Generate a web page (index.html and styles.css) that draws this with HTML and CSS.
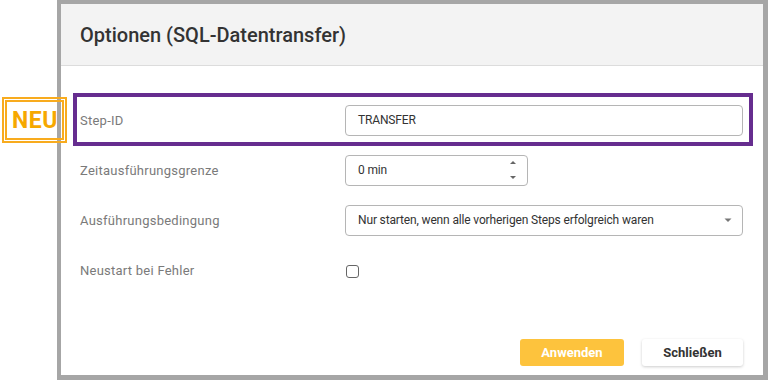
FILE: index.html
```html
<!DOCTYPE html>
<html lang="de">
<head>
    <meta charset="UTF-8">
    <meta name="viewport" content="width=device-width, initial-scale=1.0">
    <title>Optionen (SQL-Datentransfer)</title>
    <link rel="stylesheet" href="styles.css">
</head>
<body>
    <div class="stage">
        <div class="new-badge"><span>NEU</span></div>

        <div class="frame">
            <div class="dialog">
                <div class="dialog-header">
                    <h2>Optionen (SQL-Datentransfer)</h2>
                </div>

                <div class="dialog-body">
                    <div class="form-row highlight">
                        <label class="form-label">Step-ID</label>
                        <div class="field text-field">TRANSFER</div>
                    </div>

                    <div class="form-row">
                        <label class="form-label">Zeitausführungsgrenze</label>
                        <div class="field number-field">
                            <span>0 min</span>
                            <svg class="spinner" width="8" height="22" viewBox="0 0 8 22">
                                <path d="M1 5 L4 2 L7 5 Z" fill="#666"/>
                                <path d="M1 17 L4 20 L7 17 Z" fill="#666"/>
                            </svg>
                        </div>
                    </div>

                    <div class="form-row">
                        <label class="form-label">Ausführungsbedingung</label>
                        <div class="field select-field">
                            <span>Nur starten, wenn alle vorherigen Steps erfolgreich waren</span>
                            <svg class="caret" width="8" height="5" viewBox="0 0 8 5">
                                <path d="M0.5 0.5 L4 4 L7.5 0.5 Z" fill="#777"/>
                            </svg>
                        </div>
                    </div>

                    <div class="form-row">
                        <label class="form-label">Neustart bei Fehler</label>
                        <span class="checkbox"></span>
                    </div>
                </div>

                <div class="dialog-footer">
                    <button class="btn btn-primary">Anwenden</button>
                    <button class="btn btn-default">Schließen</button>
                </div>
            </div>
        </div>
    </div>
</body>
</html>
```

FILE: styles.css
```css
body {
    margin: 0;
    background: #fff;
    font-family: Roboto, "Liberation Sans", Arial, sans-serif;
}

.stage {
    position: relative;
    width: 768px;
    height: 380px;
    padding-left: 57px;
    box-sizing: border-box;
}

.frame {
    height: 100%;
    background: #a6a6a6;
    padding: 4px 5px 5px 4px;
    box-sizing: border-box;
}

.dialog {
    height: 100%;
    background: #fff;
    display: flex;
    flex-direction: column;
}

.dialog-header {
    height: 61px;
    background: #f3f3f3;
    border-bottom: 1px solid #dcdcdc;
    display: flex;
    align-items: center;
    padding-left: 19px;
}

.dialog-header h2 {
    margin: 0;
    font-size: 20px;
    font-weight: 500;
    color: #333;
}

.dialog-body {
    padding: 29px 20px 0 19px;
}

.form-row {
    height: 50px;
    display: flex;
    align-items: center;
    position: relative;
}

.form-row.highlight::after {
    content: "";
    position: absolute;
    top: -2px;
    right: -10px;
    bottom: -1px;
    left: -7px;
    border: 4px solid #662d8f;
    pointer-events: none;
}

.form-label {
    width: 265px;
    flex-shrink: 0;
    font-size: 13px;
    letter-spacing: 0.25px;
    color: #7a7a7a;
}

.field {
    height: 31px;
    box-sizing: border-box;
    border: 1px solid #b5b5b5;
    border-radius: 4px;
    padding: 0 12px;
    display: flex;
    align-items: center;
    font-size: 12px;
    letter-spacing: -0.15px;
    color: #333;
}

.text-field {
    flex: 1;
}

.number-field {
    width: 183px;
    justify-content: space-between;
    padding-right: 10px;
}

.select-field {
    flex: 1;
    justify-content: space-between;
    padding-right: 10px;
}

.checkbox {
    width: 13px;
    height: 13px;
    margin: 2px 0 0 1px;
    border: 1.5px solid #666;
    border-radius: 3px;
    box-sizing: border-box;
}

.dialog-footer {
    margin-top: auto;
    display: flex;
    justify-content: flex-end;
    gap: 18px;
    padding: 0 20px 9px 0;
}

.btn {
    height: 27px;
    border: none;
    border-radius: 3px;
    font-family: inherit;
    font-size: 13px;
    font-weight: 700;
    cursor: pointer;
}

.btn-primary {
    width: 104px;
    background: #fdc33d;
    color: #fff;
}

.btn-default {
    width: 101px;
    background: #fff;
    color: #333;
    box-shadow: 0 1px 3px rgba(0,0,0,0.2);
}

.new-badge {
    position: absolute;
    left: 2px;
    top: 97px;
    width: 65px;
    height: 46px;
    border: 2px solid #f8ab1e;
    box-sizing: border-box;
    display: flex;
    align-items: center;
    justify-content: center;
}

.new-badge::before {
    content: "";
    position: absolute;
    top: 1px;
    right: 1px;
    bottom: 1px;
    left: 1px;
    border: 2px solid #f8ab1e;
}

.new-badge span {
    font-size: 23px;
    font-weight: 700;
    color: #f6a800;
    letter-spacing: 0.5px;
    margin: 1px 0 0 1px;
}
```
